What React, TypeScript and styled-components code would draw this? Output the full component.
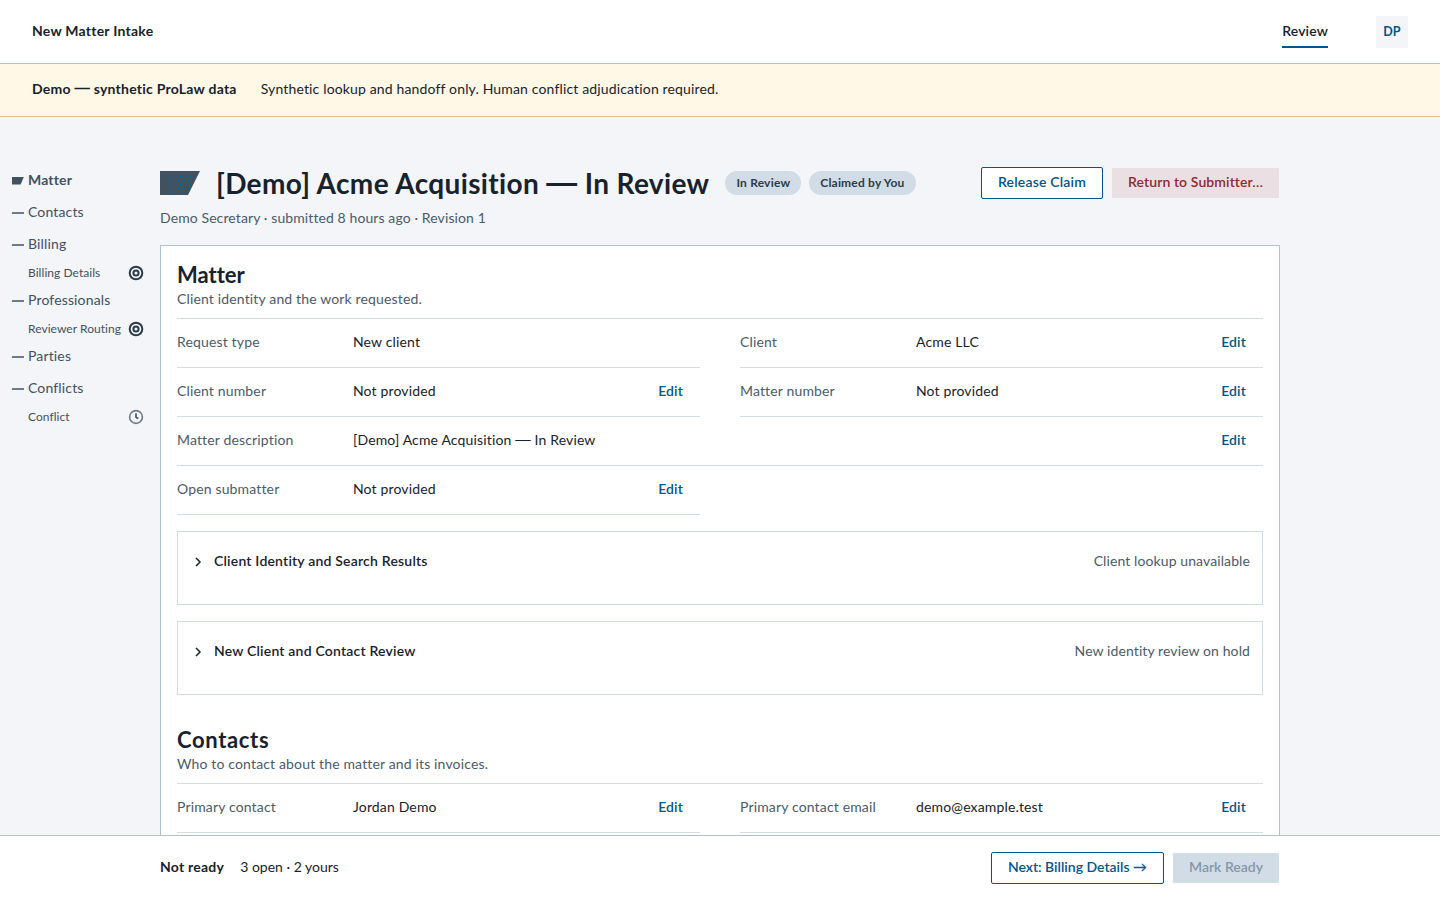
import { ReactNode } from "react";
import styled, { createGlobalStyle } from "styled-components";

const GlobalStyle = createGlobalStyle`
  * {
    box-sizing: border-box;
  }
  body {
    margin: 0;
    background: #f3f5f9;
    color: #17222d;
    font-family: Lato, "Liberation Sans", sans-serif;
    font-size: 14px;
    line-height: 20px;
    letter-spacing: 0.15px;
    font-variant-ligatures: none;
  }
  h1, h2, p, ul, dl, dt, dd {
    margin: 0;
    padding: 0;
  }
  ul {
    list-style: none;
  }
`;

const Page = styled.div`
  height: 900px;
  display: flex;
  flex-direction: column;
  overflow: hidden;
`;

const Header = styled.header`
  flex: none;
  height: 64px;
  padding: 0 32px;
  display: flex;
  align-items: center;
  background: #fff;
  border-bottom: 1px solid #b1c1d2;
`;

const Strong = styled.span`
  font-weight: 700;
  letter-spacing: 0.24px;
  white-space: nowrap;
`;

const Brand = styled(Strong)`
  padding-bottom: 2px;
`;

const LongDash = styled.span`
  font-family: "Liberation Sans", sans-serif;
  font-size: 1.1em;
  line-height: 0;
  vertical-align: 0.04em;
`;

const ReviewTab = styled.a`
  height: 32px;
  margin-left: auto;
  margin-right: 48px;
  padding-top: 5px;
  font-weight: 600;
  border-bottom: 2px solid #00568a;
`;

const Avatar = styled.div`
  width: 32px;
  height: 32px;
  display: flex;
  align-items: center;
  justify-content: center;
  border-radius: 2px;
  background: #f3f5f9;
  color: #00568a;
  font-size: 12.5px;
  font-weight: 700;
`;

const DemoBanner = styled.div`
  flex: none;
  height: 53px;
  padding: 0 32px 2px;
  display: flex;
  align-items: center;
  gap: 24px;
  background: #fff8e6;
  border-bottom: 1px solid #dfc57f;
`;

const Body = styled.div`
  flex: 1;
  min-height: 0;
  display: flex;
  overflow: hidden;
`;

const Sidebar = styled.nav`
  flex: none;
  width: 160px;
  padding: 47px 16px 0 12px;
  color: #43515f;
`;

const NavItem = styled.li<{ $active?: boolean }>`
  height: 32px;
  display: flex;
  align-items: center;
  gap: 4px;
  font-weight: ${({ $active }) => ($active ? 700 : 400)};
`;

const NavSubItem = styled.li`
  height: 24px;
  padding: 1px 0 0 16px;
  display: flex;
  align-items: center;
  justify-content: space-between;
  font-size: 12px;
  letter-spacing: 0.05px;
  white-space: nowrap;
`;

const Dash = styled.span`
  width: 12px;
  height: 2px;
  margin-top: 1px;
  background: #6b7b8c;
`;

const Flag = styled.span`
  width: 12px;
  height: 8px;
  margin-top: 1px;
  background: #43515f;
  clip-path: polygon(0 0, 100% 0, 72% 100%, 0 100%);
`;

const Main = styled.main`
  flex: none;
  width: 1120px;
  padding-top: 50px;
`;

const TitleRow = styled.div`
  height: 32px;
  display: flex;
  align-items: center;
`;

const Title = styled.h1`
  margin: 0 16px;
  font-size: 28px;
  line-height: 32px;
  font-weight: 700;
  letter-spacing: 0.36px;
  white-space: nowrap;
`;

const Pill = styled.span`
  height: 24px;
  margin-right: 8px;
  padding: 0 11px;
  border-radius: 12px;
  background: #d2dce6;
  color: #2c3b49;
  font-size: 12px;
  line-height: 24px;
  font-weight: 700;
  letter-spacing: 0.2px;
  white-space: nowrap;
`;

const Actions = styled.div`
  margin-left: auto;
  display: flex;
  gap: 8px;
`;

const Button = styled.button<{ $kind: "outline" | "danger" | "muted"; $w: number; $ls?: number }>`
  width: ${({ $w }) => $w}px;
  height: 32px;
  padding: 0 0 2px;
  border: 1px solid ${({ $kind }) => ($kind === "outline" ? "#00568a" : "transparent")};
  border-radius: 2px;
  background: ${({ $kind }) =>
    ({ outline: "#fff", danger: "#eae0e4", muted: "#d2dce6" })[$kind]};
  background-clip: padding-box;
  color: ${({ $kind }) =>
    ({ outline: "#00568a", danger: "#8c2a30", muted: "#8497a9" })[$kind]};
  font: inherit;
  font-weight: 600;
  letter-spacing: ${({ $ls = 0 }) => $ls}px;
  white-space: nowrap;
`;

const Meta = styled.p`
  margin-top: 9px;
  color: #4b5b6a;
  letter-spacing: 0.1px;
`;

const Card = styled.section`
  height: 900px;
  margin-top: 17px;
  padding: 15px 16px;
  background: #fff;
  border: 1px solid #b1c1d2;
`;

const SectionTitle = styled.h2<{ $ls: number }>`
  font-size: 22px;
  line-height: 28px;
  font-weight: 700;
  letter-spacing: ${({ $ls }) => $ls}px;
`;

const SectionNote = styled.p`
  height: 30px;
  color: #4b5b6a;
  border-bottom: 1px solid #d2dce6;
`;

const Fields = styled.dl`
  display: grid;
  grid-template-columns: 1fr 1fr;
  column-gap: 40px;
`;

const FieldRow = styled.div<{ $wide?: boolean }>`
  height: 49px;
  padding-bottom: 2px;
  display: flex;
  align-items: center;
  grid-column: ${({ $wide }) => ($wide ? "1 / -1" : "auto")};
  border-bottom: 1px solid #d2dce6;
  dt {
    width: 176px;
    color: #4b5b6a;
  }
`;

const EditLink = styled.a`
  margin-left: auto;
  padding-right: 17px;
  color: #00568a;
  font-weight: 600;
`;

const Disclosure = styled.div`
  height: 74px;
  margin-top: 16px;
  padding: 19px 12px 0 16px;
  display: flex;
  align-items: flex-start;
  border: 1px solid #d2dce6;
  svg {
    margin: 6px 12px 0 0;
  }
  strong {
    font-weight: 600;
    letter-spacing: 0.2px;
  }
  span {
    margin-left: auto;
    color: #4b5b6a;
    letter-spacing: 0.1px;
  }
`;

const SectionGap = styled.div`
  height: 31px;
`;

const Footer = styled.footer`
  flex: none;
  height: 65px;
  padding: 0 160px;
  display: flex;
  align-items: center;
  gap: 16px;
  background: #fff;
  border-top: 1px solid #b1c1d2;
`;

const OpenCount = styled.span`
  padding-bottom: 2px;
  letter-spacing: 0;
`;

const FlagPattern = () => (
  <svg width="40" height="24" viewBox="0 0 40 24" shapeRendering="crispEdges">
    <defs>
      <pattern id="dots" width="5" height="8" patternUnits="userSpaceOnUse">
        <rect x="0" y="5" width="1" height="1" fill="#006ab0" />
        <rect x="3" y="1" width="1" height="1" fill="#006ab0" />
      </pattern>
    </defs>
    <path d="M0 0H40L28 24H0Z" fill="#43515f" shapeRendering="auto" />
    <path d="M4 4H36L28 22H4Z" fill="url(#dots)" />
  </svg>
);

const TargetIcon = () => (
  <svg width="16" height="16" viewBox="0 0 16 16" fill="none" stroke="#2c3b49" strokeWidth="2">
    <circle cx="8" cy="8" r="6.3" />
    <circle cx="8" cy="8" r="2.6" />
  </svg>
);

const ClockIcon = () => (
  <svg width="16" height="16" viewBox="0 0 16 16" fill="none" stroke="#6b7b8c" strokeWidth="1.6">
    <circle cx="8" cy="8" r="6.4" />
    <path d="M8 4.3V8.2L10.3 9.5" stroke="#43515f" />
  </svg>
);

const Chevron = () => (
  <svg width="8" height="10" viewBox="0 0 8 10" fill="none" stroke="#17222d" strokeWidth="1.5">
    <path d="M2 1L6 5L2 9" />
  </svg>
);

interface FieldProps {
  label: string;
  value: ReactNode;
  wide?: boolean;
  edit?: boolean;
}

const Field = ({ label, value, wide, edit = true }: FieldProps) => (
  <FieldRow $wide={wide}>
    <dt>{label}</dt>
    <dd>{value}</dd>
    {edit && <EditLink>Edit</EditLink>}
  </FieldRow>
);

const Panel = ({ title, children }: { title: string; children: ReactNode }) => (
  <Disclosure>
    <Chevron />
    <strong>{title}</strong>
    <span>{children}</span>
  </Disclosure>
);

const MatterName = () => (
  <>
    [Demo] Acme Acquisition <LongDash>—</LongDash> In Review
  </>
);

const App = () => {
  return (
    <>
      <GlobalStyle />
      <Page>
        <Header>
          <Brand>New Matter Intake</Brand>
          <ReviewTab>Review</ReviewTab>
          <Avatar>DP</Avatar>
        </Header>
        <DemoBanner>
          <Strong>
            Demo <LongDash>—</LongDash> synthetic ProLaw data
          </Strong>
          <span>Synthetic lookup and handoff only. Human conflict adjudication required.</span>
        </DemoBanner>
        <Body>
          <Sidebar>
            <ul>
              <NavItem $active>
                <Flag />
                Matter
              </NavItem>
              <NavItem>
                <Dash />
                Contacts
              </NavItem>
              <NavItem>
                <Dash />
                Billing
              </NavItem>
              <NavSubItem>
                Billing Details
                <TargetIcon />
              </NavSubItem>
              <NavItem>
                <Dash />
                Professionals
              </NavItem>
              <NavSubItem>
                Reviewer Routing
                <TargetIcon />
              </NavSubItem>
              <NavItem>
                <Dash />
                Parties
              </NavItem>
              <NavItem>
                <Dash />
                Conflicts
              </NavItem>
              <NavSubItem>
                Conflict
                <ClockIcon />
              </NavSubItem>
            </ul>
          </Sidebar>
          <Main>
            <TitleRow>
              <FlagPattern />
              <Title>
                <MatterName />
              </Title>
              <Pill>In Review</Pill>
              <Pill>Claimed by You</Pill>
              <Actions>
                <Button $kind="outline" $w={122} $ls={0.2}>Release Claim</Button>
                <Button $kind="danger" $w={169} $ls={0.1}>Return to Submitter…</Button>
              </Actions>
            </TitleRow>
            <Meta>Demo Secretary · submitted 8 hours ago · Revision 1</Meta>
            <Card>
              <SectionTitle $ls={0}>Matter</SectionTitle>
              <SectionNote>Client identity and the work requested.</SectionNote>
              <Fields>
                <Field label="Request type" value="New client" edit={false} />
                <Field label="Client" value="Acme LLC" />
                <Field label="Client number" value="Not provided" />
                <Field label="Matter number" value="Not provided" />
                <Field label="Matter description" value={<MatterName />} wide />
                <Field label="Open submatter" value="Not provided" />
              </Fields>
              <Panel title="Client Identity and Search Results">Client lookup unavailable</Panel>
              <Panel title="New Client and Contact Review">New identity review on hold</Panel>
              <SectionGap />
              <SectionTitle $ls={0.65}>Contacts</SectionTitle>
              <SectionNote>Who to contact about the matter and its invoices.</SectionNote>
              <Fields>
                <Field label="Primary contact" value="Jordan Demo" />
                <Field label="Primary contact email" value="demo@example.test" />
              </Fields>
            </Card>
          </Main>
        </Body>
        <Footer>
          <Brand>Not ready</Brand>
          <OpenCount>3 open · 2 yours</OpenCount>
          <Actions>
            <Button $kind="outline" $w={173}>Next: Billing Details →</Button>
            <Button $kind="muted" $w={108}>Mark Ready</Button>
          </Actions>
        </Footer>
      </Page>
    </>
  );
};

export default App;
